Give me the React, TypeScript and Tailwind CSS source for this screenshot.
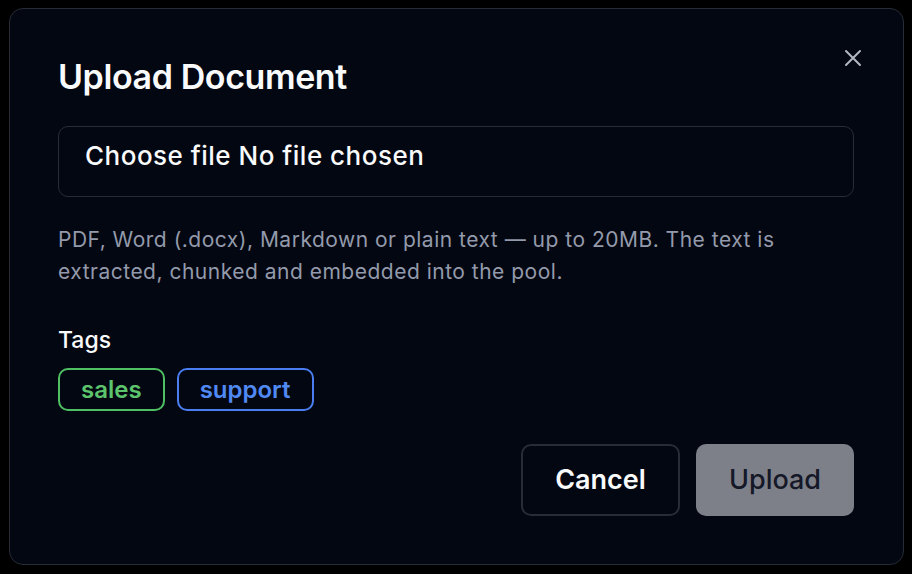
export default function App() {
  return (
    <div className="min-h-screen bg-black pt-[8px] pl-[9px] font-['Inter',sans-serif]">
      <div className="relative w-[895px] h-[557px] rounded-[14px] border border-[#262b36] bg-[#030712] pl-[48px] pr-[49px] pt-[48px]">
        <button className="absolute right-[41px] top-[40px] text-[#b3b7bf]" aria-label="Close">
          <svg width="18" height="18" viewBox="0 0 18 18" fill="none" stroke="currentColor" strokeWidth="2" strokeLinecap="round">
            <path d="M2 2L16 16M16 2L2 16" />
          </svg>
        </button>

        <h2 className="text-[34px] leading-[40px] font-semibold tracking-[-0.4px] text-[#f9fafb]">Upload Document</h2>

        <div className="mt-[29px] h-[71px] rounded-[10px] border border-[#272c37] px-[26px] pt-[13px]">
          <span className="text-[26px] leading-[32px] font-medium tracking-[0.5px] text-[#f9fafb]">Choose file No file chosen</span>
        </div>

        <p className="mt-[27px] text-[21px] leading-[32px] tracking-[0.5px] text-[#939aab]">
          PDF, Word (.docx), Markdown or plain text — up to 20MB. The text is extracted, chunked and embedded into the pool.
        </p>

        <div className="mt-[37px] text-[23px] leading-[30px] font-medium text-[#f9fafb]">Tags</div>

        <div className="mt-[13px] flex gap-[12px]">
          <span className="h-[43px] rounded-[10px] border-2 border-[#4fbf63] px-[21px] flex items-center text-[24px] font-semibold text-[#5cc46c]">
            sales
          </span>
          <span className="h-[43px] rounded-[10px] border-2 border-[#4a7ef0] px-[21px] flex items-center text-[24px] font-semibold text-[#5089f2]">
            support
          </span>
        </div>

        <div className="mt-[33px] flex justify-end gap-[16px]">
          <button className="w-[159px] h-[72px] rounded-[10px] border-2 border-[#272c37] text-[27px] font-semibold text-[#f9fafb]">
            Cancel
          </button>
          <button className="w-[158px] h-[72px] rounded-[10px] bg-[#7e8089] text-[27px] font-medium text-[#141827]">
            Upload
          </button>
        </div>
      </div>
    </div>
  );
}
